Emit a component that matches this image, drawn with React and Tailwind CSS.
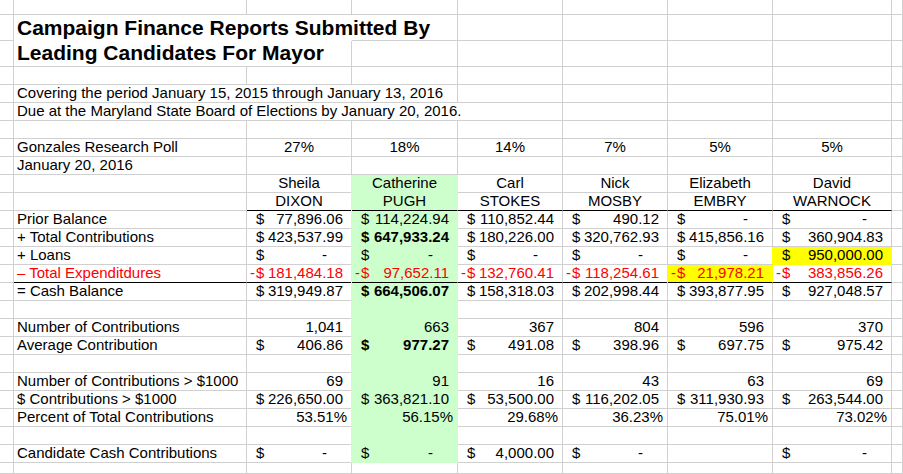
import React from "react";
import clsx from "clsx";

// value helpers
const c = (v) => ({ k: "center", v });
const n = (v) => ({ k: "count", v });
const p = (v) => ({ k: "pct", v });
const m = (v, o = {}) => ({ k: "money", v, ...o });
const z = () => ({ k: "zero" });

const ROWS = {
  7: { label: "Gonzales Research Poll", vals: ["27%", "18%", "14%", "7%", "5%", "5%"].map(c) },
  8: { label: "January 20, 2016", vals: [] },
  9: { label: "", vals: ["Sheila", "Catherine", "Carl", "Nick", "Elizabeth", "David"].map(c) },
  10: { label: "", vals: ["DIXON", "PUGH", "STOKES", "MOSBY", "EMBRY", "WARNOCK"].map(c) },
  11: {
    label: "Prior Balance",
    vals: [m("77,896.06"), m("114,224.94"), m("110,852.44"), m("490.12"), z(), z()],
  },
  12: {
    label: "+ Total Contributions",
    vals: [
      m("423,537.99"),
      m("647,933.24", { bold: true }),
      m("180,226.00"),
      m("320,762.93"),
      m("415,856.16"),
      m("360,904.83"),
    ],
  },
  13: { label: "+ Loans", vals: [z(), z(), z(), z(), z(), m("950,000.00")] },
  14: {
    label: "– Total Expenditdures",
    red: true,
    vals: [
      m("181,484.18", { neg: true }),
      m("97,652.11", { neg: true }),
      m("132,760.41", { neg: true }),
      m("118,254.61", { neg: true }),
      m("21,978.21", { neg: true }),
      m("383,856.26", { neg: true }),
    ],
  },
  15: {
    label: "= Cash Balance",
    vals: [
      m("319,949.87"),
      m("664,506.07", { bold: true }),
      m("158,318.03"),
      m("202,998.44"),
      m("393,877.95"),
      m("927,048.57"),
    ],
  },
  17: { label: "Number of Contributions", vals: ["1,041", "663", "367", "804", "596", "370"].map(n) },
  18: {
    label: "Average Contribution",
    vals: [m("406.86"), m("977.27", { bold: true }), m("491.08"), m("398.96"), m("697.75"), m("975.42")],
  },
  20: { label: "Number of Contributions > $1000", vals: ["69", "91", "16", "43", "63", "69"].map(n) },
  21: {
    label: "$ Contributions > $1000",
    vals: [
      m("226,650.00"),
      m("363,821.10"),
      m("53,500.00"),
      m("116,202.05"),
      m("311,930.93"),
      m("263,544.00"),
    ],
  },
  22: {
    label: "Percent of Total Contributions",
    vals: ["53.51%", "56.15%", "29.68%", "36.23%", "75.01%", "73.02%"].map(p),
  },
  24: { label: "Candidate Cash Contributions", vals: [z(), z(), m("4,000.00"), z(), null, z()] },
};

function Cell({ row, col, className, children }) {
  const green = col === 3 && row >= 9 && row <= 24;
  const yellow = (col === 6 && row === 14) || (col === 7 && row === 13);
  const blackBottom =
    (row === 10 && col >= 2 && col <= 7) || (row === 14 && col >= 1 && col <= 7);

  return (
    <div
      className={clsx(
        "border-r border-b leading-[15px] whitespace-nowrap",
        green
          ? "bg-[#ccffcc] border-r-[#ccffcc] shadow-[-1px_0_0_#ccffcc]"
          : yellow
          ? "bg-[#ffff00] border-r-[#ffff00] shadow-[-1px_0_0_#ffff00]"
          : "border-r-[#d0d0d0]",
        blackBottom
          ? "border-b-black"
          : green
          ? "border-b-[#ccffcc]"
          : yellow
          ? "border-b-[#ffff00]"
          : "border-b-[#d0d0d0]",
        className
      )}
    >
      {children}
    </div>
  );
}

function Value({ val }) {
  if (!val) return null;

  if (val.k === "center") return <div className="text-center">{val.v}</div>;
  if (val.k === "count") return <div className="text-right pr-[8px]">{val.v}</div>;
  if (val.k === "pct") return <div className="text-right pr-[4px]">{val.v}</div>;

  if (val.k === "zero") {
    return (
      <div className="flex justify-between pl-[9px] pr-[24px]">
        <span>$</span>
        <span>-</span>
      </div>
    );
  }

  return (
    <div
      className={clsx(
        "flex justify-between pl-[3px] pr-[8px]",
        val.bold && "font-bold",
        val.neg && "text-[#ff0000]"
      )}
    >
      <span className="flex">
        <span className="w-[6px]">{val.neg ? "-" : ""}</span>$
      </span>
      <span>{val.v}</span>
    </div>
  );
}

function PlainRow({ row }) {
  const data = ROWS[row];

  return (
    <>
      <Cell row={row} col={0} />
      <Cell row={row} col={1} className={clsx("pl-[3px]", data && data.red && "text-[#ff0000]")}>
        {data && data.label}
      </Cell>
      {[2, 3, 4, 5, 6, 7].map((col) => (
        <Cell key={col} row={row} col={col} className={clsx(data && data.red && "text-[#ff0000]")}>
          <Value val={data && data.vals[col - 2]} />
        </Cell>
      ))}
      <Cell row={row} col={8} />
    </>
  );
}

export default function App() {
  const rest = [];
  for (let r = 6; r <= 25; r++) rest.push(<PlainRow key={r} row={r} />);

  return (
    <div className="w-[903px] h-[474px] overflow-hidden bg-white text-black text-[15px] font-['Liberation_Sans',Arial,sans-serif]">
      <div className="grid grid-cols-[14px_233px_105px_106px_105px_105px_105px_119px_1fr] grid-rows-[15px_26px_26px_repeat(22,18px)_1fr] h-full">
        {/* row 0 */}
        <PlainRow row={0} />

        {/* title, merged over two rows */}
        <Cell row={1} col={0} />
        <div className="col-span-2 row-span-2 border-b border-b-[#d0d0d0] pl-[3px] text-[21px] font-bold leading-[25px] whitespace-nowrap">
          Campaign Finance Reports Submitted By
          <br />
          Leading Candidates For Mayor
        </div>
        {[3, 4, 5, 6, 7, 8].map((col) => (
          <Cell key={col} row={1} col={col} />
        ))}
        <Cell row={2} col={0} />
        <Cell row={2} col={3} className="shadow-[-1px_0_0_#d0d0d0]" />
        {[4, 5, 6, 7, 8].map((col) => (
          <Cell key={col} row={2} col={col} />
        ))}

        <PlainRow row={3} />

        {/* notes overflow across columns */}
        <Cell row={4} col={0} />
        <Cell row={4} col={1} className="col-span-3 pl-[3px]">
          Covering the period January 15, 2015 through January 13, 2016
        </Cell>
        {[4, 5, 6, 7, 8].map((col) => (
          <Cell key={col} row={4} col={col} />
        ))}
        <Cell row={5} col={0} />
        <Cell row={5} col={1} className="col-span-4 pl-[3px]">
          Due at the Maryland State Board of Elections by January 20, 2016.
        </Cell>
        {[5, 6, 7, 8].map((col) => (
          <Cell key={col} row={5} col={col} />
        ))}

        {rest}
      </div>
    </div>
  );
}
